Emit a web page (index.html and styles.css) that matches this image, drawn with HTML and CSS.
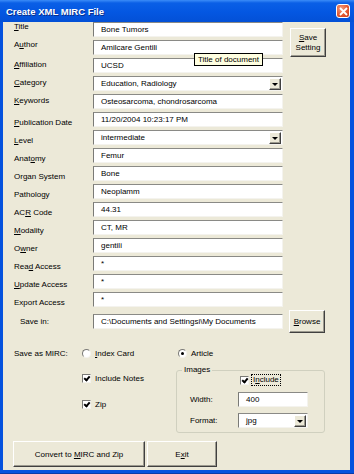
FILE: index.html
```html
<!DOCTYPE html>
<html lang="en">
<head>
  <meta charset="UTF-8">
  <meta name="viewport" content="width=device-width, initial-scale=1.0">
  <title>Create XML MIRC File</title>
  <link rel="stylesheet" href="styles.css">
</head>
<body>
  <div class="win">
    <div class="titlebar">
      <span class="ttl">Create XML MIRC File</span>
      <span class="close">
        <svg width="9" height="9" viewBox="0 0 9 9"><path d="M1 1L8 8M8 1L1 8" stroke="#fff" stroke-width="1.8"/></svg>
      </span>
    </div>

    <div class="client">
      <div class="form">
        <div class="lbl up"><u>T</u>itle</div>
        <div class="fld">Bone Tumors</div>
        <div class="btn save"><span><u>S</u>ave</span><span>Setting</span></div>

        <div class="lbl up">A<u>u</u>thor</div>
        <div class="fld">Amilcare Gentili</div>

        <div class="lbl"><u>A</u>ffiliation</div>
        <div class="fld">UCSD</div>

        <div class="lbl"><u>C</u>ategory</div>
        <div class="fld sel"><span class="val">Education, Radiology</span><span class="arr"></span></div>

        <div class="lbl"><u>K</u>eywords</div>
        <div class="fld">Osteosarcoma, chondrosarcoma</div>

        <div class="lbl lo"><u>P</u>ublication Date</div>
        <div class="fld">11/20/2004 10:23:17 PM</div>

        <div class="lbl lo"><u>L</u>evel</div>
        <div class="fld sel"><span class="val">intermediate</span><span class="arr"></span></div>

        <div class="lbl lo">Anat<u>o</u>my</div>
        <div class="fld">Femur</div>

        <div class="lbl lo">Organ System</div>
        <div class="fld">Bone</div>

        <div class="lbl lo">Pathology</div>
        <div class="fld">Neoplamm</div>

        <div class="lbl lo">AC<u>R</u> Code</div>
        <div class="fld">44.31</div>

        <div class="lbl lo"><u>M</u>odality</div>
        <div class="fld">CT, MR</div>

        <div class="lbl lo">O<u>w</u>ner</div>
        <div class="fld">gentili</div>

        <div class="lbl lo">Rea<u>d</u> Access</div>
        <div class="fld">*</div>

        <div class="lbl lo"><u>U</u>pdate Access</div>
        <div class="fld">*</div>

        <div class="lbl lo">Export Access</div>
        <div class="fld">*</div>
      </div>

      <div class="savein">
        <div class="lbl2">Save in:</div>
        <div class="fld">C:\Documents and Settingsi\My Documents</div>
        <div class="btn browse"><span><u>B</u>rowse</span></div>
      </div>

      <div class="mode">
        <div class="lbl3">Save as MIRC:</div>
        <div class="opt w1"><span class="radio"></span><span><u>I</u>ndex Card</span></div>
        <div class="opt"><span class="radio on"></span><span>Article</span></div>
      </div>

      <div class="extra">
        <div class="checks">
          <div class="opt"><span class="chk"></span><span>Include Notes</span></div>
          <div class="opt zip"><span class="chk"></span><span>Zip</span></div>
        </div>
        <fieldset class="grp">
          <legend>Images</legend>
          <div class="opt inc"><span class="chk"></span><span class="focus">I<u>n</u>clude</span></div>
          <div class="grow">
            <span class="glbl">Width:</span>
            <div class="fld small">400</div>
          </div>
          <div class="grow">
            <span class="glbl">Format:</span>
            <div class="fld sel small"><span class="val">jpg</span><span class="arr"></span></div>
          </div>
        </fieldset>
      </div>

      <div class="actions">
        <div class="btn big"><span>Convert to <u>M</u>IRC and Zip</span></div>
        <div class="btn exit"><span>E<u>x</u>it</span></div>
      </div>

      <div class="tip">Title of document</div>
    </div>
  </div>
</body>
</html>
```

FILE: styles.css
```css
*{margin: 0; padding: 0; box-sizing: border-box;}

body{
  font-family: "Liberation Sans", Arial, sans-serif;
  font-size: 8px;
  color: #000;
  background: #fff;
}

.win{
  width: 354px;
  height: 474px;
  display: flex;
  flex-direction: column;
  background: #0552de;
  border-bottom: 1px solid #0a3aa8;
}

.titlebar{
  height: 22px;
  display: flex;
  align-items: center;
  justify-content: space-between;
  padding: 0 4px 0 6px;
  background: linear-gradient(#3b8cf8 0, #0a5fe6 3px, #0457e2 12px, #0350d6 100%);
}

.ttl{
  color: #fff;
  font-weight: bold;
  font-size: 9.5px;
  text-shadow: 1px 1px 0 #0a2f8a;
}

.close{
  width: 14px;
  height: 14px;
  display: flex;
  align-items: center;
  justify-content: center;
  border: 1px solid #fff;
  border-radius: 3px;
  background: radial-gradient(circle at 35% 30%, #f39a7c, #e2552d 60%, #c8391a);
}

.client{
  flex: 1;
  margin: 0 4px 3px 3px;
  background: #ece9d8;
  position: relative;
}

/* top form */
.form{
  display: grid;
  grid-template-columns: 90px 190px 1fr;
  grid-auto-rows: 18px;
}

.lbl{
  grid-column: 1;
  padding-left: 11px;
  line-height: 14px;
  white-space: nowrap;
}
.lbl.up{ margin-top: -2px; }
.lbl.lo{ padding-top: 4px; }

.fld{
  height: 15px;
  background: #fff;
  border: 1px solid;
  border-color: #8a8a86 #f4f3ee #f4f3ee #7a7a76;
  padding-left: 7px;
  line-height: 13px;
  white-space: nowrap;
  overflow: hidden;
}
.form .fld{ grid-column: 2; }

.sel{
  display: flex;
  align-items: center;
  padding-right: 1px;
}
.sel .val{ flex: 1; }
.arr{
  width: 12px;
  height: 12px;
  background: #ece9d8;
  border: 1px solid;
  border-color: #fff #404040 #404040 #fff;
  box-shadow: inset -1px -1px #9c9a8f;
  display: flex;
  align-items: center;
  justify-content: center;
}
.arr::after{
  content: "";
  border-left: 3px solid transparent;
  border-right: 3px solid transparent;
  border-top: 3px solid #000;
  margin-top: 1px;
}

.btn{
  background: #ece9d8;
  border: 1px solid;
  border-color: #fff #404040 #404040 #fff;
  box-shadow: inset -1px -1px #9c9a8f;
  display: flex;
  align-items: center;
  justify-content: center;
  text-align: center;
  white-space: nowrap;
}

.save{
  grid-column: 3;
  grid-row: 1 / span 3;
  align-self: start;
  width: 36px;
  height: 29px;
  margin: 6px 0 0 7px;
  flex-direction: column;
  line-height: 10px;
}

/* save in */
.savein{
  display: flex;
  align-items: center;
  height: 23px;
}
.lbl2{
  width: 90px;
  padding-left: 17px;
}
.savein .fld{ width: 190px; }
.browse{
  width: 36px;
  height: 23px;
  margin-left: 6px;
}

/* lower part */
.mode{
  display: flex;
  align-items: center;
  height: 14px;
  margin-top: 13px;
  padding-left: 11px;
}
.lbl3{ width: 68px; }
.w1{ width: 96px; }

.opt{
  display: flex;
  align-items: center;
  gap: 4px;
  height: 14px;
  white-space: nowrap;
}

.radio{
  width: 9px;
  height: 9px;
  border-radius: 50%;
  background: #fff;
  border: 1px solid;
  border-color: #7a7a76 #f4f3ee #f4f3ee #7a7a76;
  display: flex;
  align-items: center;
  justify-content: center;
}
.radio.on::after{
  content: "";
  width: 3px;
  height: 3px;
  border-radius: 50%;
  background: #000;
}

.chk{
  width: 9px;
  height: 9px;
  background: #fff;
  border: 1px solid;
  border-color: #7a7a76 #f4f3ee #f4f3ee #7a7a76;
  position: relative;
}
.chk::after{
  content: "";
  position: absolute;
  left: 2px;
  top: 0px;
  width: 2px;
  height: 4px;
  border: solid #000;
  border-width: 0 2px 2px 0;
  transform: rotate(40deg);
}

.extra{
  display: flex;
  margin-top: 5px;
  padding-left: 79px;
}
.checks{
  width: 94px;
  padding-top: 6px;
}
.zip{ margin-top: 12px; }

.grp{
  width: 149px;
  height: 68px;
  border: 1px solid #d0d0bf;
  border-radius: 3px;
  padding: 0;
}
.grp legend{
  margin-left: 5px;
  padding: 0 2px;
  line-height: 10px;
}
.inc{
  margin-top: -2px;
  padding-left: 63px;
  gap: 2px;
}
.focus{
  border: 1px dotted #000;
  padding: 0 1px;
  line-height: 10px;
}
.grow{
  display: flex;
  align-items: center;
  height: 15px;
  margin-top: 5px;
  padding-left: 13px;
}
.grow + .grow{ margin-top: 6px; }
.glbl{ width: 48px; }
.small{ width: 70px; }

.actions{
  display: flex;
  gap: 2px;
  margin-top: 8px;
  padding-left: 10px;
}
.big{
  width: 132px;
  height: 26px;
}
.exit{
  width: 70px;
  height: 26px;
}

.tip{
  position: absolute;
  left: 191px;
  top: 31px;
  width: 69px;
  height: 13px;
  background: #ffffe1;
  border: 1px solid #000;
  line-height: 11px;
  text-align: center;
  white-space: nowrap;
}
```
